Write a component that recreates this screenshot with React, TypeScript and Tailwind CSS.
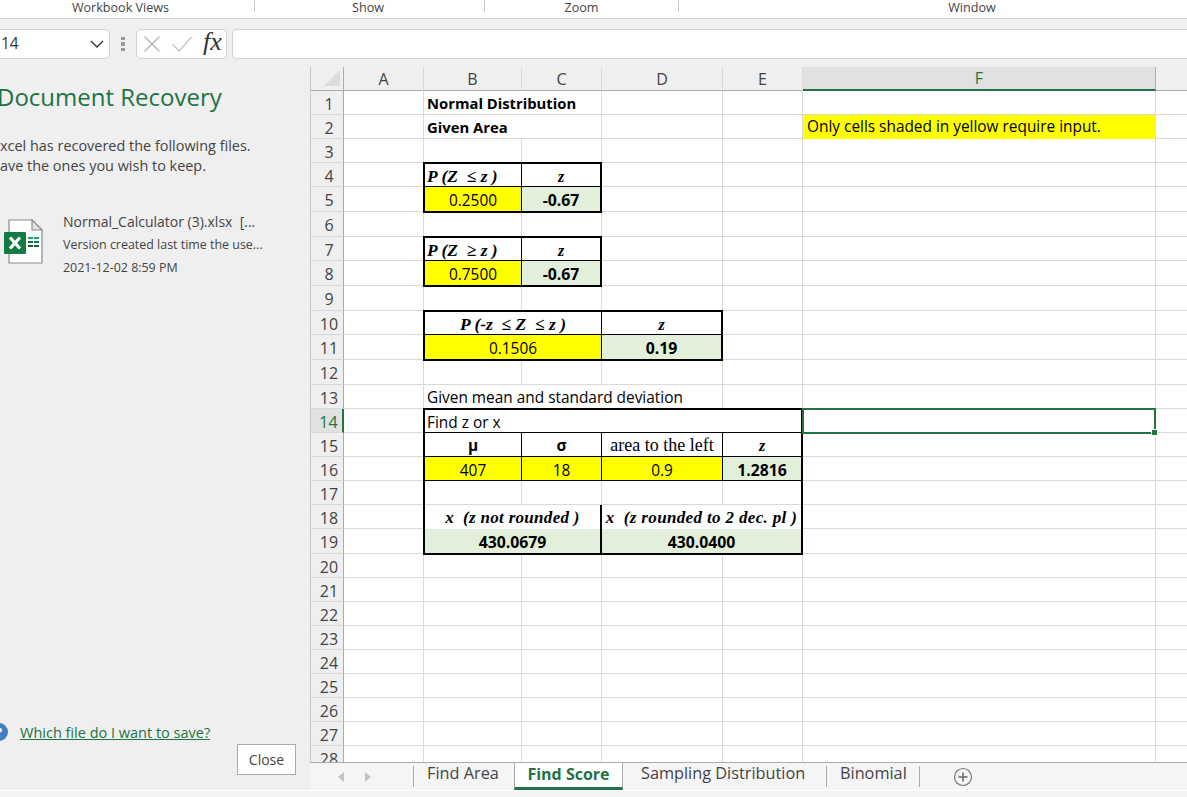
const rowHeights = [24, 24, 24, 24, 25, 25, 24, 25, 25, 24, 25, 25, 24, 24, 24, 24, 24, 24, 25, 24, 24, 24, 24, 24, 24, 24, 24, 24];

const line = "border-r border-b border-r-[#d9d9d9] border-b-[#d9d9d9]";

const Math_ = ({ children, size = "text-[17.5px]" }: { children: React.ReactNode; size?: string }) => (
  <span className={`font-['Liberation_Serif',serif] font-bold italic whitespace-nowrap ${size}`}>{children}</span>
);

const Box = ({ className = "", children }: { className?: string; children?: React.ReactNode }) => (
  <div className={`flex items-center justify-center border-black pt-[2px] ${className}`}>{children}</div>
);

const yellow = "bg-[#ffff00] !pt-[4px]";
const green = "bg-[#e2efda] font-bold text-[15.8px] !pt-[4px]";

const Tables = () => (
  <>
    <Box className="[grid-area:5/3/6/4] -ml-px -mt-px bg-white border-t-2 border-l-2 border-b border-r !justify-start pl-[2px] !pt-[3px]"><Math_>P (Z&nbsp; ≤ z )</Math_></Box>
    <Box className="[grid-area:5/4/6/5] -mt-px bg-white border-t-2 border-r-2 border-b !pt-[3px]"><Math_ size="text-[16px]">z</Math_></Box>
    <Box className={`[grid-area:6/3/7/4] -ml-px -mb-px border-l-2 border-b-2 border-r ${yellow}`}>0.2500</Box>
    <Box className={`[grid-area:6/4/7/5] -mb-px border-r-2 border-b-2 ${green}`}>-0.67</Box>

    <Box className="[grid-area:8/3/9/4] -ml-px -mt-px bg-white border-t-2 border-l-2 border-b border-r !justify-start pl-[2px] !pt-[3px]"><Math_>P (Z&nbsp; ≥ z )</Math_></Box>
    <Box className="[grid-area:8/4/9/5] -mt-px bg-white border-t-2 border-r-2 border-b !pt-[3px]"><Math_ size="text-[16px]">z</Math_></Box>
    <Box className={`[grid-area:9/3/10/4] -ml-px -mb-px border-l-2 border-b-2 border-r ${yellow}`}>0.7500</Box>
    <Box className={`[grid-area:9/4/10/5] -mb-px border-r-2 border-b-2 ${green}`}>-0.67</Box>

    <Box className="[grid-area:11/3/12/5] -ml-px -mt-px bg-white border-t-2 border-l-2 border-b border-r !pt-[3px]"><Math_>P (-z&nbsp; ≤ Z&nbsp; ≤ z )</Math_></Box>
    <Box className="[grid-area:11/5/12/6] -mt-px bg-white border-t-2 border-r-2 border-b !pt-[3px]"><Math_ size="text-[16px]">z</Math_></Box>
    <Box className={`[grid-area:12/3/13/5] -ml-px -mb-px border-l-2 border-b-2 border-r ${yellow}`}>0.1506</Box>
    <Box className={`[grid-area:12/5/13/6] -mb-px border-r-2 border-b-2 ${green}`}>0.19</Box>

    <Box className="[grid-area:15/3/16/7] -ml-px -mt-px bg-white border-t-2 border-l-2 border-r-2 border-b !justify-start pl-[2px] !pt-[4px]">Find z or x</Box>
    <Box className="[grid-area:16/3/17/4] -ml-px bg-white border-l-2 border-r border-b font-bold">μ</Box>
    <Box className="[grid-area:16/4/17/5] bg-white border-r border-b font-bold">σ</Box>
    <Box className="[grid-area:16/5/17/6] bg-white border-r border-b"><span className="font-['Liberation_Serif',serif] text-[18px] whitespace-nowrap">area to the left</span></Box>
    <Box className="[grid-area:16/6/17/7] bg-white border-r-2 border-b"><Math_ size="text-[16px]">z</Math_></Box>
    <Box className={`[grid-area:17/3/18/4] -ml-px border-l-2 border-r border-b ${yellow}`}>407</Box>
    <Box className={`[grid-area:17/4/18/5] border-r border-b ${yellow}`}>18</Box>
    <Box className={`[grid-area:17/5/18/6] border-r border-b ${yellow}`}>0.9</Box>
    <Box className={`[grid-area:17/6/18/7] border-r-2 border-b ${green}`}>1.2816</Box>
    <Box className="[grid-area:18/3/19/7] -ml-px border-l-2 border-r-2" />
    <Box className="[grid-area:19/3/20/5] -ml-px bg-white border-l-2 border-r-2"><Math_ size="text-[17px] tracking-[0.3px]">x&nbsp; (z not rounded )</Math_></Box>
    <Box className="[grid-area:19/5/20/7] bg-white border-r-2"><Math_ size="text-[17px] tracking-[0.35px]">x&nbsp; (z rounded to 2 dec. pl )</Math_></Box>
    <Box className={`[grid-area:20/3/21/5] -ml-px -mb-px border-l-2 border-r-2 border-b-2 ${green}`}>430.0679</Box>
    <Box className={`[grid-area:20/5/21/7] -mb-px border-r-2 border-b-2 ${green}`}>430.0400</Box>

    <div className="[grid-area:15/7/16/8] -mt-px -ml-px -mb-px border-2 border-[#217346] relative">
      <div className="absolute -right-[4px] -bottom-[4px] w-[7px] h-[7px] bg-[#217346] border border-white" />
    </div>
  </>
);

const ExcelIcon = () => (
  <svg width="44" height="46" viewBox="0 0 44 46" className="shrink-0 mt-[7px]">
    <path d="M10 1H33L43 11V44H10Z" fill="#fff" stroke="#8c8c8c" strokeWidth="1.2" />
    <path d="M33 1V11H43Z" fill="#e4e4e4" stroke="#8c8c8c" strokeWidth="1.2" />
    <rect x="5" y="13" width="22" height="22" rx="1" fill="#107c41" />
    <path d="M11 18.5L21 29.5M21 18.5L11 29.5" stroke="#fff" strokeWidth="3.2" />
    <path d="M29 18h5v2h-5zM35 18h5v2h-5z" fill="#21a366" />
    <path d="M29 22h5v2h-5zM35 22h5v2h-5z" fill="#107c41" />
    <path d="M29 26h5v2h-5zM35 26h5v2h-5z" fill="#185c37" />
  </svg>
);

const Group = ({ label, className, divider = true }: { label: string; className: string; divider?: boolean }) => (
  <div className={`flex items-start ${className}`}>
    <div className="flex-1 text-center leading-[16px] whitespace-nowrap">{label}</div>
    {divider && <i className="block w-px h-[12px] bg-[#c8c8c8]" />}
  </div>
);

const App = () => {
  const labels = ["A", "B", "C", "D", "E"];
  const allRows = rowHeights.map((h) => `${h}px`).join(" ");

  return (
    <div className="w-[1187px] h-[797px] overflow-hidden bg-[#f3f3f3] font-['Open_Sans',sans-serif] text-[15.4px] text-black flex flex-col">
      {/* ribbon leftover */}
      <div className="h-[19px] shrink-0 bg-white border-b border-[#cfcfcf] flex text-[12.6px] text-[#444]">
        <Group label="Workbook Views" className="w-[255px] shrink-0 [&>div]:pr-[13px]" />
        <Group label="Show" className="w-[230px] shrink-0 [&>div]:pr-[3px]" />
        <Group label="Zoom" className="w-[194px] shrink-0" />
        <Group label="Window" className="flex-1 pl-[78px]" divider={false} />
      </div>
      {/* formula bar */}
      <div className="h-[48px] shrink-0 bg-[#efefef] pt-[10px] flex items-start">
        <div className="w-[111px] h-[30px] -ml-px bg-white border border-[#d0d0d0] rounded-r-[5px] flex items-center justify-between pr-[5px] pl-[1px] text-[15.5px] text-[#333]">
          <span>14</span>
          <svg width="14" height="8" viewBox="0 0 14 8"><path d="M1 1L7 7L13 1" stroke="#333" strokeWidth="1.3" fill="none" /></svg>
        </div>
        <div className="w-[26px] h-[30px] flex flex-col items-center justify-center gap-[2px]">
          <i className="block w-[4px] h-[3.5px] bg-[#999]" />
          <i className="block w-[4px] h-[3.5px] bg-[#999]" />
          <i className="block w-[4px] h-[3.5px] bg-[#999]" />
        </div>
        <div className="w-[91px] h-[30px] bg-white border border-[#d0d0d0] rounded-[5px] flex items-center pl-[7px]">
          <svg width="16" height="16" viewBox="0 0 16 16" className="shrink-0"><path d="M0.5 0.5L15.5 15.5M15.5 0.5L0.5 15.5" stroke="#b5b5b5" strokeWidth="1.3" fill="none" /></svg>
          <svg width="20" height="16" viewBox="0 0 20 16" className="ml-[12px] shrink-0"><path d="M0.5 8L7 15L19.5 1" stroke="#c4c4c4" strokeWidth="1.3" fill="none" /></svg>
          <span className="ml-[11px] font-['Liberation_Serif',serif] italic text-[26px] font-normal text-[#333] leading-none -mt-[4px] whitespace-nowrap">fx</span>
        </div>
        <div className="flex-1 h-[30px] ml-[5px] bg-white border border-[#d0d0d0] border-r-0 rounded-l-[5px]" />
      </div>
      <div className="h-[724px] shrink-0 flex border-b border-white">
        {/* recovery pane */}
        <div className="w-[310px] shrink-0 h-[723px] bg-[#efefef] relative overflow-hidden">
          <div className="-ml-[3px] mt-[12px] text-[24px] leading-[36px] text-[#217346] whitespace-nowrap">Document Recovery</div>
          <div className="-ml-[8px] mt-[21px] text-[14.45px] leading-[20px] text-[#444] whitespace-nowrap">
            <div>Excel has recovered the following files.</div>
            <div>Save the ones you wish to keep.</div>
          </div>
          <div className="flex mt-[36px] -ml-[1px]">
            <ExcelIcon />
            <div className="ml-[20px] whitespace-nowrap text-[#444]">
              <div className="text-[14px] leading-[20px]">Normal_Calculator (3).xlsx&nbsp; [...</div>
              <div className="text-[12.45px] leading-[23px] mt-[1px]">Version created last time the use...</div>
              <div className="text-[12.45px] leading-[23px]">2021-12-02 8:59 PM</div>
            </div>
          </div>
          <div className="absolute left-[-10px] top-[656px] w-[18px] h-[18px] rounded-full bg-[#3f7fc1] text-white text-[13px] font-bold text-center leading-[18px]">?</div>
          <div className="absolute left-[20px] top-[656px] text-[14.5px] leading-[19px] text-[#217346] underline whitespace-nowrap">Which file do I want to save?</div>
          <div className="absolute left-[237px] top-[677px] w-[59px] h-[31px] bg-white border border-[#ababab] flex items-center justify-center text-[14px] text-[#444]">Close</div>
        </div>
        {/* sheet */}
        <div className="flex-1 min-w-0 overflow-hidden bg-white relative">
          <div
            className="grid grid-cols-[33px_80px_98px_80px_121px_80px_353px_32px] border-l border-[#c6c6c6]"
            style={{ gridTemplateRows: `24px ${allRows}` }}
          >
            {/* corner */}
            <div className="bg-[#efefef] border-r border-b border-[#ababab] relative [grid-area:1/1/2/2]">
              <svg width="16" height="16" viewBox="0 0 16 16" className="absolute right-[3px] bottom-[4px]"><path d="M16 0V16H0Z" fill="#dcdcdc" /></svg>
            </div>
            {labels.map((l, i) => (
              <div key={l} style={{ gridColumn: i + 2, gridRow: 1 }} className="bg-[#efefef] border-r border-r-[#d9d9d9] border-b border-b-[#ababab] flex items-center justify-center text-[16px] text-[#444]">{l}</div>
            ))}
            <div style={{ gridColumn: 7, gridRow: 1 }} className="bg-[#e1e1e1] border-r border-r-[#ababab] border-b-2 border-b-[#217346] flex items-center justify-center text-[16px] text-[#217346]">F</div>
            <div style={{ gridColumn: 8, gridRow: 1 }} className="bg-[#efefef] border-b border-b-[#ababab]" />
            {rowHeights.map((_, r) => (
              <div key={r} style={{ gridColumn: 1, gridRow: r + 2 }} className={`border-r border-b-[#d9d9d9] border-b flex items-center justify-center pl-[4px] pt-[2px] text-[16px] ${r === 13 ? "bg-[#e1e1e1] text-[#217346] border-r-2 border-r-[#217346]" : "bg-[#efefef] text-[#444] border-r-[#ababab]"}`}>{r + 1}</div>
            ))}
            {rowHeights.flatMap((_, r) =>
              [2, 3, 4, 5, 6, 7, 8].map((c) => (
                <div key={`${r}-${c}`} style={{ gridColumn: c, gridRow: r + 2 }} className={line} />
              ))
            )}
            {/* text cells */}
            <div className={`[grid-area:2/3/3/5] pl-[3px] pt-[2px] bg-white font-bold text-[14.8px] flex items-center whitespace-nowrap ${line}`}>Normal Distribution</div>
            <div className={`[grid-area:3/3/4/5] pl-[3px] pt-[2px] bg-white font-bold text-[14.8px] flex items-center whitespace-nowrap ${line}`}>Given Area</div>
            <div className="[grid-area:3/7/4/8] pl-1 bg-[#ffff00] flex items-center whitespace-nowrap">Only cells shaded in yellow require input.</div>
            <div className={`[grid-area:14/3/15/6] pl-[3px] pt-[2px] bg-white flex items-center whitespace-nowrap ${line}`}>Given mean and standard deviation</div>
            <Tables />
          </div>
          {/* tab strip */}
          <div className="absolute left-0 right-0 bottom-0 h-[28px] bg-[#f5f5f5] border-t border-[#ababab] flex items-stretch text-[16.3px] text-[#444]">
            <svg width="8" height="10" viewBox="0 0 8 10" className="absolute left-[27px] top-[9px]"><path d="M7 0V10L1 5Z" fill="#c4c4c4" /></svg>
            <svg width="8" height="10" viewBox="0 0 8 10" className="absolute left-[54px] top-[9px]"><path d="M1 0V10L7 5Z" fill="#c4c4c4" /></svg>
            <div className="ml-[103px] my-[3px] border-l border-[#aaa] pl-[13px] w-[101px] leading-[15px] whitespace-nowrap">Find Area</div>
            <div className="w-[109px] -mt-px bg-white border-x border-t border-[#ababab] border-b-[3px] border-b-[#217346] flex items-center justify-center pb-[3px] font-bold text-[16px] text-[#217346] whitespace-nowrap">Find Score</div>
            <div className="pl-[18px] w-[203px] pt-[3px] leading-[15px] whitespace-nowrap">Sampling Distribution</div>
            <div className="my-[3px] border-l border-r border-[#aaa] pl-[13px] w-[94px] leading-[15px] whitespace-nowrap">Binomial</div>
            <svg width="20" height="20" viewBox="0 0 20 20" className="ml-[33px] mt-[4px]"><circle cx="10" cy="10" r="8.5" fill="none" stroke="#777" strokeWidth="1.2" /><path d="M10 5.5V14.5M5.5 10H14.5" stroke="#666" strokeWidth="1.5" /></svg>
          </div>
        </div>
      </div>
    </div>
  );
};

export default App;
